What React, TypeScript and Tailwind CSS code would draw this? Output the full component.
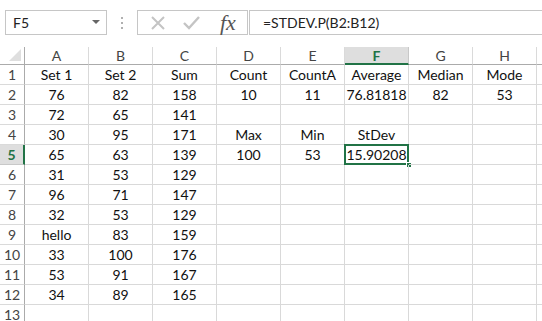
import React from 'react'

const cols = ['A', 'B', 'C', 'D', 'E', 'F', 'G', 'H']

const data: string[][] = [
    ['Set 1', 'Set 2', 'Sum', 'Count', 'CountA', 'Average', 'Median', 'Mode'],
    ['76', '82', '158', '10', '11', '76.81818', '82', '53'],
    ['72', '65', '141', '', '', '', '', ''],
    ['30', '95', '171', 'Max', 'Min', 'StDev', '', ''],
    ['65', '63', '139', '100', '53', '15.90208', '', ''],
    ['31', '53', '129', '', '', '', '', ''],
    ['96', '71', '147', '', '', '', '', ''],
    ['32', '53', '129', '', '', '', '', ''],
    ['hello', '83', '159', '', '', '', '', ''],
    ['33', '100', '176', '', '', '', '', ''],
    ['53', '91', '167', '', '', '', '', ''],
    ['34', '89', '165', '', '', '', '', ''],
    ['', '', '', '', '', '', '', ''],
]

function Toolbar() {
    return (
        <div className="flex items-start h-[47px] pt-[10px] pl-[5px]">
            {/* Name box */}
            <div className="w-[102px] h-[25px] border border-[#c6c6c6] flex items-center pl-[7px] pr-[6px] text-[14px] text-[#222]">
                <span className="flex-1">F5</span>
                <svg width="8" height="5" viewBox="0 0 8 5">
                    <path d="M0 0 L8 0 L4 4 Z" fill="#666" />
                </svg>
            </div>
            {/* Separator dots */}
            <div className="w-[30px] h-[25px] flex flex-col items-center justify-center gap-[3px]">
                <div className="w-[2px] h-[2px] bg-[#b0b0b0]" />
                <div className="w-[2px] h-[2px] bg-[#b0b0b0]" />
                <div className="w-[2px] h-[2px] bg-[#b0b0b0]" />
            </div>
            {/* Cancel / Enter / fx */}
            <div className="w-[111px] h-[25px] border border-[#c6c6c6] flex items-center">
                <svg width="16" height="16" viewBox="0 0 16 16" className="ml-[12px]">
                    <path d="M2 2 L14 14 M14 2 L2 14" stroke="#c4c4c4" strokeWidth="2" />
                </svg>
                <svg width="17" height="14" viewBox="0 0 17 14" className="ml-[17px]">
                    <path d="M1 7 L6 12 L16 1" stroke="#c4c4c4" strokeWidth="2.4" fill="none" />
                </svg>
                <span className="ml-[20px] font-['Liberation_Serif',serif] italic text-[22px] text-[#555] leading-none">
                    fx
                </span>
            </div>
            {/* Formula input */}
            <div className="flex-1 h-[25px] ml-[1px] border border-r-0 border-[#c6c6c6] flex items-center pl-[13px] text-[14px] text-[#222]">
                =STDEV.P(B2:B12)
            </div>
        </div>
    )
}

export default function App() {
    return (
        <div className="w-[542px] h-[321px] bg-white overflow-hidden font-['Lato',sans-serif]">
            <Toolbar />
            <div className="grid grid-cols-[25px_repeat(8,64px)_1fr]">
                {/* Column headers */}
                <div className="h-[18px] border-r border-b border-[#ababab] relative">
                    <svg width="12" height="12" viewBox="0 0 12 12" className="absolute right-[3px] bottom-[3px]">
                        <path d="M12 0 L12 12 L0 12 Z" fill="#dfdfdf" />
                    </svg>
                </div>
                {cols.map((c) => (
                    <div
                        key={c}
                        className={`h-[18px] flex items-center justify-center text-[14px] ${c === 'F'
                            ? 'bg-[#dedede] border-r border-b-2 border-r-[#c8c8c8] border-b-[#217346] text-[#217346] font-bold'
                            : 'border-r border-b border-r-[#dadada] border-b-[#ababab] text-[#444]'
                            }`}
                    >
                        {c}
                    </div>
                ))}
                <div className="h-[18px] border-b border-[#ababab]" />

                {/* Rows */}
                {data.map((row, ri) => {
                    const rowNum = ri + 1
                    const selRow = rowNum === 5
                    return (
                        <React.Fragment key={ri}>
                            <div
                                className={`h-[20px] flex items-center justify-center text-[14px] border-b ${selRow
                                    ? 'bg-[#dedede] border-r-2 border-r-[#217346] border-b-[#c8c8c8] text-[#217346] font-bold'
                                    : 'border-r border-r-[#ababab] border-b-[#dadada] text-[#444]'
                                    }`}
                            >
                                {rowNum}
                            </div>
                            {row.map((v, ci) => {
                                const sel = selRow && ci === 5
                                return (
                                    <div
                                        key={ci}
                                        className="h-[20px] relative flex items-center justify-center text-[14px] text-[#111] border-r border-b border-[#d9d9d9]"
                                    >
                                        {v}
                                        {sel && (
                                            <>
                                                <div className="absolute -left-[1px] -top-[1px] -right-[1px] -bottom-[1px] border-2 border-[#217346]" />
                                                <div className="absolute -right-[4px] -bottom-[4px] w-[6px] h-[6px] bg-[#217346] border border-white" />
                                            </>
                                        )}
                                    </div>
                                )
                            })}
                            <div className="h-[20px] border-b border-[#d9d9d9]" />
                        </React.Fragment>
                    )
                })}
            </div>
        </div>
    )
}
